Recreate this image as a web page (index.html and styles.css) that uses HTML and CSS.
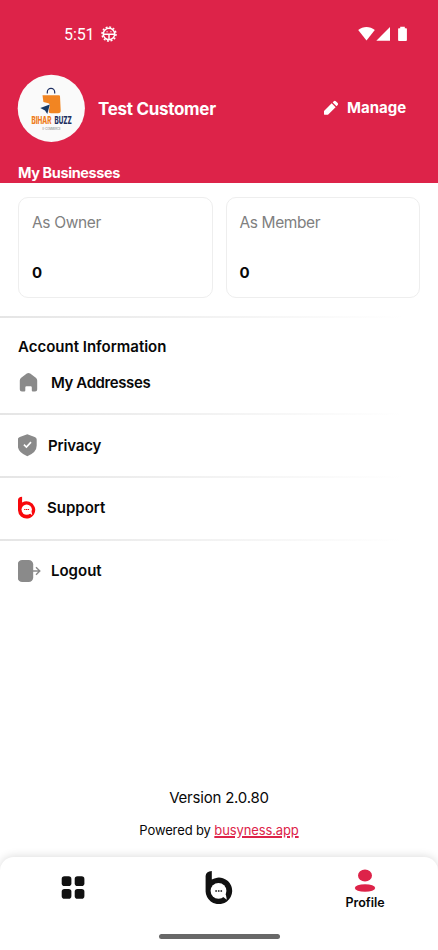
FILE: index.html
```html
<!DOCTYPE html>
<html lang="en">
<head>
<meta charset="utf-8">
<title>Profile</title>
<link rel="stylesheet" href="styles.css">
</head>
<body>
<div class="screen">
  <header class="header">
    <div class="status">
      <span class="time">5:51</span>
      <svg class="gear" width="16" height="16" viewBox="0 0 16 16" fill="none" stroke="#fff">
        <circle cx="8" cy="8" r="7" stroke-width="1.500" stroke-dasharray="2 1.665"/>
        <circle cx="8" cy="8" r="5.700" stroke-width="1.500"/>
        <path d="M2.500 8.300h11M8 8.300v5" stroke-width="1.500"/>
        <path d="M5.500 5.800h1.200M9.300 5.800h1.200" stroke-width="1"/>
      </svg>
      <svg class="signals" width="50" height="16" viewBox="0 0 50 16" fill="#fff">
        <path d="M.2 4.100C5-.1 12-.1 16.800 4.100L8.500 14.500z"/>
        <path d="M18.300 14.700L32 1v13.700z"/>
        <path d="M40.800 2.300h1.400V.8h4.600v1.500h1.400q.7 0 .7.8v10.800q0 1-.9 1h-7q-.9 0-.9-1V3.100q0-.8.7-.8z"/>
      </svg>
    </div>
    <div class="account">
      <svg class="avatar" width="68" height="68" viewBox="0 0 68 68">
        <circle cx="34.300" cy="34.300" r="33.600" fill="#fafafa"/>
        <path d="M30.300 19.500V18a3.700 3.700 0 0 1 7.400 0v1.500" fill="none" stroke="#1d2f62" stroke-width="1.200"/>
        <path d="M25.500 21.300h16.500q.9 0 1 1l.7 14q.3 3-2.700 3H34q-2.500 0-2.200-2.200l1-5.500q.2-1.800-1.400-2.300l-5-1.200z" fill="#f28522"/>
        <path d="M23.300 34l9.500-3.500-2.500 9.500-2.300-3.500z" fill="#183a68"/>
        <g transform="scale(1 1.8)">
          <text class="logo-word" x="14.500" y="28" textLength="20" lengthAdjust="spacingAndGlyphs" fill="#ef7d21">BIHAR</text>
          <text class="logo-word" x="37.500" y="28" textLength="17.300" lengthAdjust="spacingAndGlyphs" fill="#1d2f62">BUZZ</text>
        </g>
        <text class="logo-sub" x="25.500" y="55.600" textLength="18" lengthAdjust="spacingAndGlyphs" fill="#777">E-COMMERCE</text>
      </svg>
      <h1 class="name">Test Customer</h1>
      <svg class="pencil" width="16" height="16" viewBox="0 0 16 16" fill="#fff">
        <path d="M1 11L8.700 3.300l3.900 3.900L5 14.800H1.900q-.9 0-.9-.9zM9.700 2.400l1.100-1.200q1-.9 2 0l1.900 1.900q.9 1 0 2l-1.200 1.200z"/>
      </svg>
      <span class="manage">Manage</span>
    </div>
    <h2 class="business-title">My Businesses</h2>
  </header>

  <main class="content">
    <section class="cards">
      <div class="card"><span class="label owner">As Owner</span><strong class="count">0</strong></div>
      <div class="card"><span class="label member">As Member</span><strong class="count">0</strong></div>
    </section>
    <div class="divider"></div>
    <h2 class="section-title">Account Information</h2>
    <div class="row addresses">
      <svg width="33" height="24" viewBox="0 0 33 24" fill="#8a8a8a">
        <path d="M1.800 9.400q0-1.700 1.400-2.700l5.600-4.200q1.700-1.200 3.400 0l5.600 4.200q1.400 1 1.400 2.700v9.100q0 2.100-2.100 2.100h-2.300q-1 0-1-1v-3.200q0-1.100-1.100-1.100H8.400q-1.100 0-1.100 1.100v3.200q0 1-1 1H3.900q-2.100 0-2.100-2.100z"/>
      </svg>
      <span class="text address-text">My Addresses</span>
    </div>
    <div class="divider"></div>
    <div class="row privacy">
      <svg width="30" height="24" viewBox="0 0 30 24">
        <path d="M9.300.2L16.700 2.900q2 .7 2 2.700v6q0 7-9.400 10.600Q-.2 18.600-.2 11.600v-6q0-2 2-2.700z" fill="#8a8a8a"/>
        <path d="M5.900 10.700l2.500 2.400 4.600-5" fill="none" stroke="#fff" stroke-width="1.600"/>
      </svg>
      <span class="text privacy-text">Privacy</span>
    </div>
    <div class="divider"></div>
    <div class="row support">
      <svg width="29" height="24" viewBox="0 0 29 24">
        <path d="M0 4Q0 1 4.100.7v5.900A8.600 8.600 0 1 1 0 13.700z" fill="#f8080c"/>
        <circle cx="8.700" cy="13.600" r="5.200" fill="#fff"/>
        <path d="M11 16.700l3.300 2.500-.8-3.800z" fill="#fff"/>
        <path d="M6.200 13.500h5" stroke="#f8080c" stroke-width="1" stroke-dasharray="1.300 .5"/>
      </svg>
      <span class="text">Support</span>
    </div>
    <div class="divider"></div>
    <div class="row logout">
      <svg width="33" height="24" viewBox="0 0 33 24">
        <rect x="-.3" y="1" width="15.500" height="22" rx="4.500" fill="#8a8a8a"/>
        <path d="M15 12h6.500M18 8.200l3.800 3.800-3.800 3.800" fill="none" stroke="#8a8a8a" stroke-width="1.400"/>
      </svg>
      <span class="text">Logout</span>
    </div>
    <footer class="about">
      <p class="version">Version 2.0.80</p>
      <p class="powered">Powered by <a class="link">busyness.app</a></p>
    </footer>
  </main>

  <nav class="nav">
    <div class="tabs">
      <div class="tab">
        <svg width="24" height="36" viewBox="0 0 24 36" fill="#111">
          <rect x=".7" y="8.300" width="9.700" height="9.700" rx="2.800"/><rect x="13.700" y="8.300" width="9.700" height="9.700" rx="2.800"/>
          <rect x=".7" y="21" width="9.700" height="9.700" rx="2.800"/><rect x="13.700" y="21" width="9.700" height="9.700" rx="2.800"/>
        </svg>
      </div>
      <div class="tab">
        <svg width="28" height="36" viewBox="0 0 28 36">
          <path d="M.6 8Q.8 3.500 6.800 2.900v8.700a13.300 13.300 0 1 1-6.200 11.800z" fill="#111"/>
          <circle cx="13.500" cy="22.800" r="7.900" fill="#fff"/>
          <path d="M17 28l4.800 3.700-1-5.500z" fill="#fff"/>
          <path d="M10.300 23h1.600m1 0h1.600m1 0h1.600" stroke="#111" stroke-width="1.600"/>
        </svg>
      </div>
      <div class="tab">
        <svg width="22" height="25" viewBox="0 0 22 25" fill="#dd2349">
          <ellipse cx="11" cy="7.500" rx="7" ry="6"/><ellipse cx="11" cy="20" rx="10.200" ry="3.800"/>
        </svg>
        <span class="tab-label">Profile</span>
      </div>
    </div>
    <div class="home-bar"></div>
  </nav>
</div>
</body>
</html>
```
FILE: styles.css
```css
* { box-sizing: border-box; }
body, h1, h2, p { margin: 0; }
body { font-family: Inter, "Liberation Sans", sans-serif; color: #080808; background: #fff; }
svg { display: block; flex-shrink: 0; }
.screen { width: 438px; height: 950px; display: flex; flex-direction: column; overflow: hidden; }

.header { height: 183px; background: #dd2349; color: #fff; padding: 26px 18px 0; }
.status { display: flex; align-items: center; height: 16px; padding-left: 46px; }
.time { font-family: Roboto, sans-serif; font-size: 16px; line-height: 16px; width: 37px; letter-spacing: -.1px; padding-top: 1px; }
.signals { margin-left: auto; margin-right: 12px; }
.account { display: flex; align-items: center; height: 68px; margin-top: 32px; }
.avatar { margin-left: -1px; }
.logo-word { font: 800 5.500px Inter, sans-serif; }
.logo-sub { font: 3px Inter, sans-serif; }
.name { font-size: 17px; font-weight: 700; line-height: 24px; margin-left: 13px; padding-top: 2px; white-space: nowrap; letter-spacing: -.3px; }
.pencil { margin-left: auto; }
.manage { width: 60px; margin: 0 13px 0 8px; font-size: 15px; font-weight: 700; line-height: 20px; letter-spacing: 0; }
.business-title { margin-top: 21px; font-size: 14.500px; line-height: 20px; font-weight: 700; letter-spacing: -.4px; }

.content { flex: 1; display: flex; flex-direction: column; }
.cards { display: grid; grid-template-columns: 1fr 1fr; gap: 13px; padding: 14px 18px 18px; }
.card { height: 101px; border: 1px solid #eee; border-radius: 10px; padding: 15px 13px; display: flex; flex-direction: column; }
.label { color: #808080; font-size: 15.500px; line-height: 20px; }
.owner { letter-spacing: -.35px; }
.member { letter-spacing: -.4px; }
.count { font-size: 15px; line-height: 20px; margin-top: 30px; }
.divider { height: 2px; background: linear-gradient(90deg, #e5e5e5, #f3f3f3 50%, #fff 92%); flex-shrink: 0; }
.section-title { padding: 19px 18px 0; font-size: 15px; line-height: 20px; font-weight: 600; }
.row { height: 61px; padding-left: 18px; display: flex; align-items: center; }
.addresses { height: 56px; padding-bottom: 4px; }
.support, .logout { padding-bottom: 2px; }
.text { font-size: 15px; line-height: 20px; font-weight: 600; }
.address-text { letter-spacing: -.4px; }
.privacy-text { letter-spacing: -.15px; }
.about { margin-top: auto; padding-bottom: 18px; text-align: center; }
.version { font-size: 15px; line-height: 20px; letter-spacing: -.2px; }
.powered { margin-top: 13px; font-size: 13px; line-height: 18px; letter-spacing: -.12px; }
.link { color: #dd2349; text-decoration: underline; text-decoration-thickness: 1.5px; }

.nav { height: 93px; border-radius: 14px 14px 0 0; background: #fff; box-shadow: 0 -1px 8px #0002; display: flex; flex-direction: column; align-items: center; padding-top: 11px; }
.tabs { width: 100%; display: grid; grid-template-columns: repeat(3, 1fr); height: 66px; }
.tab { display: flex; flex-direction: column; align-items: center; }
.tab-label { font-size: 12.500px; line-height: 16px; margin-top: 2px; font-weight: 600; }
.home-bar { width: 121px; height: 5px; border-radius: 3px; background: #686868; }
```
